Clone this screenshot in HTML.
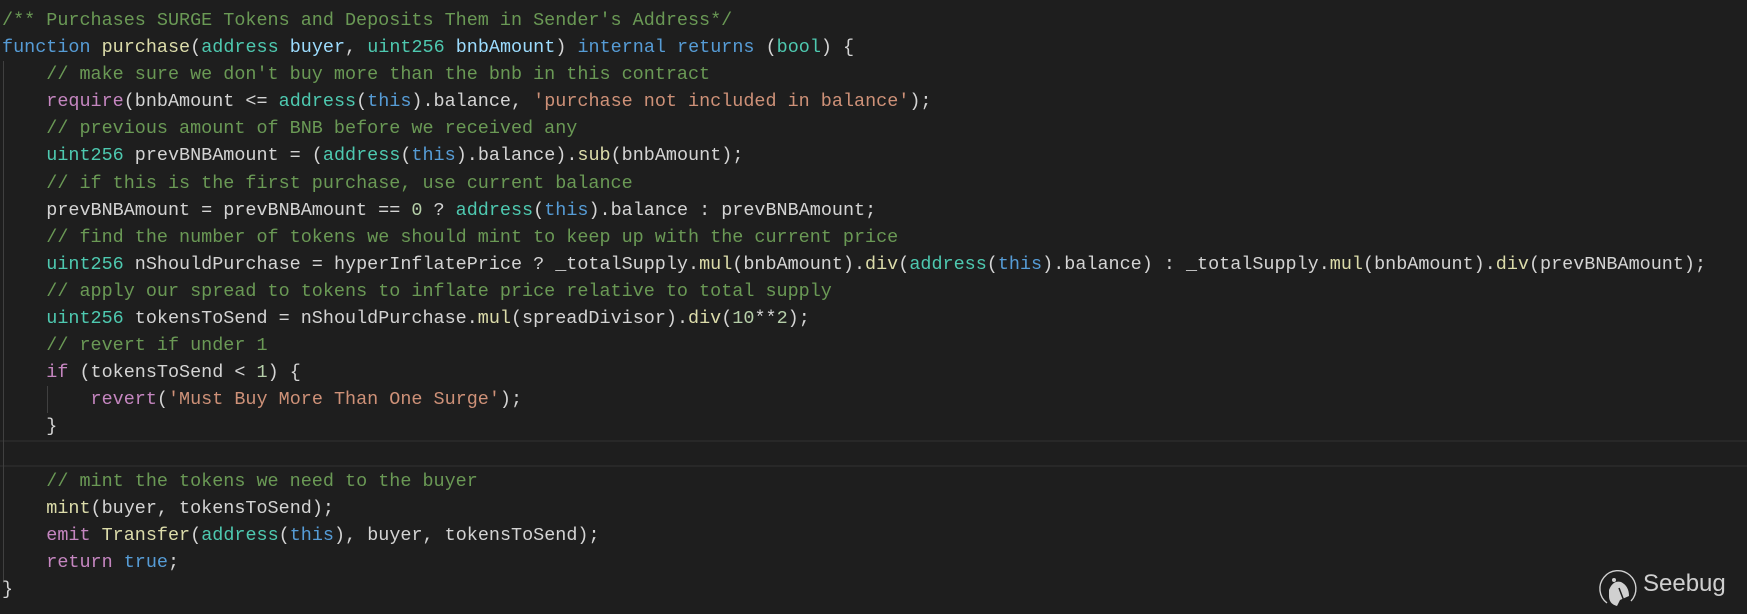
<!DOCTYPE html>
<html><head><meta charset="utf-8"><style>
html,body{margin:0;padding:0;background:#1e1e1e;width:1747px;height:614px;overflow:hidden}
pre{margin:0;padding:7px 0 0 2px;font-family:"Liberation Mono",monospace;font-size:18.44px;line-height:27.1px;color:#d4d4d4;position:relative;white-space:pre}
.c{color:#6a9955}.k{color:#569cd6}.f{color:#dcdcaa}.t{color:#4ec9b0}.p{color:#9cdcfe}.m{color:#c586c0}.s{color:#ce9178}.n{color:#b5cea8}
.guide{position:absolute;left:3px;top:61px;width:1px;height:522px;background:#404040}
.guide2{position:absolute;left:47px;top:386px;width:1px;height:27px;background:#404040}
.cur{position:absolute;left:0;top:440px;width:1747px;height:27px;border-top:2px solid #282828;border-bottom:2px solid #282828;box-sizing:border-box}
.logo{position:absolute;left:1598px;top:566px}
.logotxt{position:absolute;left:1643px;top:570px;font-family:"Liberation Sans",sans-serif;font-size:24px;color:#cfcfcf;font-weight:normal}
</style></head><body>
<div class="cur"></div>
<div class="guide"></div><div class="guide2"></div>
<pre><span class="c">/** Purchases SURGE Tokens and Deposits Them in Sender's Address*/</span>
<span class="k">function</span> <span class="f">purchase</span>(<span class="t">address</span> <span class="p">buyer</span>, <span class="t">uint256</span> <span class="p">bnbAmount</span>) <span class="k">internal</span> <span class="k">returns</span> (<span class="t">bool</span>) {
    <span class="c">// make sure we don't buy more than the bnb in this contract</span>
    <span class="m">require</span>(bnbAmount &lt;= <span class="t">address</span>(<span class="k">this</span>).balance, <span class="s">'purchase not included in balance'</span>);
    <span class="c">// previous amount of BNB before we received any</span>
    <span class="t">uint256</span> prevBNBAmount = (<span class="t">address</span>(<span class="k">this</span>).balance).<span class="f">sub</span>(bnbAmount);
    <span class="c">// if this is the first purchase, use current balance</span>
    prevBNBAmount = prevBNBAmount == <span class="n">0</span> ? <span class="t">address</span>(<span class="k">this</span>).balance : prevBNBAmount;
    <span class="c">// find the number of tokens we should mint to keep up with the current price</span>
    <span class="t">uint256</span> nShouldPurchase = hyperInflatePrice ? _totalSupply.<span class="f">mul</span>(bnbAmount).<span class="f">div</span>(<span class="t">address</span>(<span class="k">this</span>).balance) : _totalSupply.<span class="f">mul</span>(bnbAmount).<span class="f">div</span>(prevBNBAmount);
    <span class="c">// apply our spread to tokens to inflate price relative to total supply</span>
    <span class="t">uint256</span> tokensToSend = nShouldPurchase.<span class="f">mul</span>(spreadDivisor).<span class="f">div</span>(<span class="n">10</span>**<span class="n">2</span>);
    <span class="c">// revert if under 1</span>
    <span class="m">if</span> (tokensToSend &lt; <span class="n">1</span>) {
        <span class="m">revert</span>(<span class="s">'Must Buy More Than One Surge'</span>);
    }

    <span class="c">// mint the tokens we need to the buyer</span>
    <span class="f">mint</span>(buyer, tokensToSend);
    <span class="m">emit</span> <span class="f">Transfer</span>(<span class="t">address</span>(<span class="k">this</span>), buyer, tokensToSend);
    <span class="m">return</span> <span class="k">true</span>;
}</pre>
<svg class="logo" width="42" height="42" viewBox="0 0 42 42">
<path d="M9 37 A18 18 0 1 1 33 35" fill="none" stroke="#d0d0d0" stroke-width="1.4"/>
<path d="M11 24 Q15 14 23 16 Q31 20 31 30 L22 34 L19 40 Q11 38 11 30 Z" fill="#d0d0d0"/>
<line x1="21" y1="22" x2="26" y2="35" stroke="#1e1e1e" stroke-width="1.5"/>
<circle cx="16" cy="14" r="2" fill="#d0d0d0"/>
</svg>
<div class="logotxt">Seebug</div>
</body></html>
